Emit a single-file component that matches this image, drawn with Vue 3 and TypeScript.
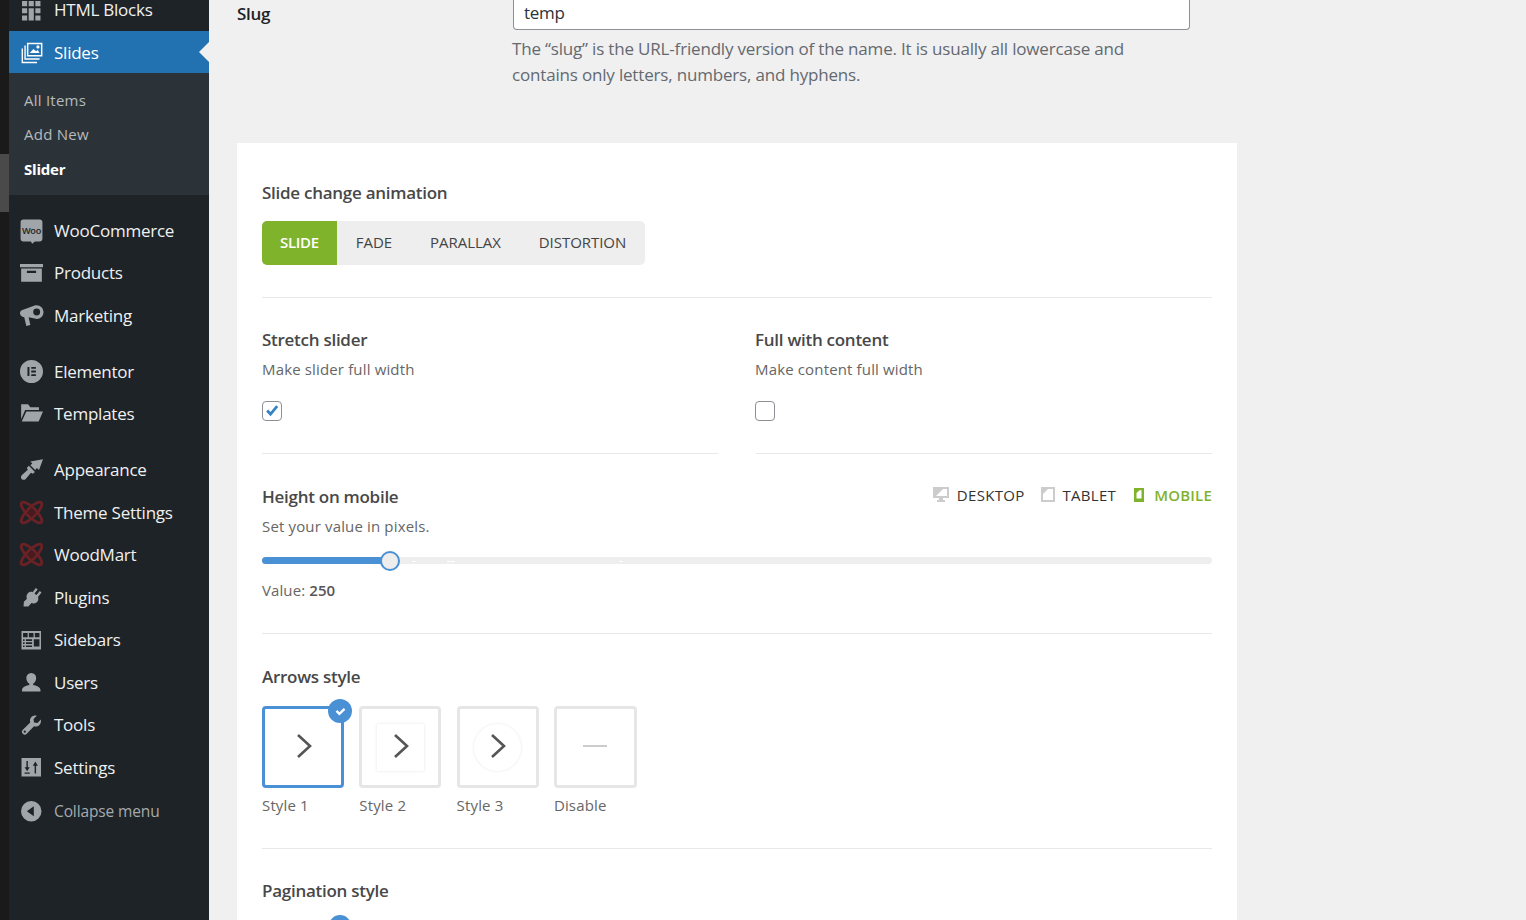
<script setup lang="ts">
interface MenuItem { label: string; icon: string; gap?: boolean; theme?: boolean; small?: boolean }

const icons: Record<string, string> = {
  html: 'M1 -6h18v5H1z M1 1h5v5H1z M7.5 1h5v5h-5z M14 1h5v5h-5z M1 8h5v5H1z M7.5 8h5v12h-5z M14 8h5v5h-5z M1 15h5v5H1z M14 15h5v5h-5z',
  slides: 'M6 1.500h13.500v12H6z M7.300 2.800v9.400h10.900V2.800z M8.500 10.500l3.200-3.600 2.200 2 1.500-1 1.600 2.600z M15.600 3.800a1.400 1.400 0 1 1 0 2.800 1.400 1.400 0 0 1 0-2.800z M3.800 4H5v11h12v1.300H3.800z M1.400 6.500H2.600V18h12.200v1.300H1.400z',
  woo: 'M3 .5h14A2.500 2.500 0 0 1 19.500 3v14a2.500 2.500 0 0 1-2.500 2.500h-4l-2.500 2-1-2H3A2.500 2.500 0 0 1 .5 17V3A2.500 2.500 0 0 1 3 .5z',
  products: 'M0 2.500h20v3H0z M1 6.500h18V18H1z M6 8.500v2h8v-2z',
  marketing: 'M14.500 1a6 6 0 0 1 0 12c-.6 0-1.200-.1-1.700-.3L7.500 11.500l1.500 6.800-3.500.8-1.800-7.500-1.700-.5C.9 10.300 0 9.200 0 8s.8-2.300 2-2.700L12.800 1.300c.5-.2 1.100-.3 1.700-.3z M14.500 4a3 3 0 1 0 0 6 3 3 0 0 0 0-6z',
  elementor: 'M10 0a10 10 0 1 1 0 20 10 10 0 0 1 0-20z M6.500 6v8h1.700V6z M9.800 6v1.600h4V6z M9.800 9.200v1.600h4V9.200z M9.800 12.400V14h4v-1.600z',
  templates: 'M1 2h6l2 2.500h7.500V7H4.500L1 15z M5.500 8.200H20L16.200 17H1.500z',
  appearance: 'M20 1l-3.500 9.500-1.800-1.700-1.500 1.700-4.200-4.200 1.700-1.500L9 3.100z M7.700 6.800l5.300 5.300-1.800 1.700-1.700-.9-4.500 5.300c-1 1-2.600 1-3.600 0-.9-.9-.7-2.500.3-3.400l5.100-4.500-.9-1.700z',
  plugins: 'M14.500 1l1.800 1.400-3.200 4 2 1.500 3.200-3.900 1.700 1.400-3.400 4.300c.7 1.900.2 3.900-1.200 5.200-1.500 1.300-3.500 1.500-5.200.7L7.200 19H2.500l.3-4.600 3-3C5 9.700 5.300 7.700 6.500 6.300 7.700 4.900 9.600 4.300 11.200 5z',
  sidebars: 'M.5 1h19v18H.5z M2 3v4h4.500V3z M7.700 3v4h4.500V3z M13.500 3v4H18V3z M2 9v1.700h1.500V9z M4.800 9v1.700h6V9z M12.500 9v7H18V9z M2 12v1.700h1.500V12z M4.800 12v1.700h6V12z M2 15v1.700h1.500V15z M4.800 15v1.700h6V15z',
  users: 'M10 1a4.800 4.800 0 0 1 4.800 5.200c0 2.500-1.700 4.600-3 5.300v1.200c2.800.6 7.200 1.700 7.200 5V19H1v-1.300c0-3.300 4.400-4.400 7.200-5v-1.200c-1.300-.7-3-2.800-3-5.300A4.800 4.800 0 0 1 10 1z',
  tools: 'M19.300 4.500c.5 1.800.1 3.800-1.300 5.200-1.500 1.500-3.500 1.800-5.300 1.200L5.600 18.200a2.600 2.600 0 0 1-3.800-3.800l7.200-7.200c-.6-1.800-.2-3.800 1.200-5.200C11.600.6 13.600.2 15.400.7l-3.200 3.200.5 3.500 3.400.5zM3.700 15.200a1.100 1.100 0 1 0 0 2.200 1.100 1.100 0 0 0 0-2.200z',
  settings: 'M.5 1h19v18H.5z M5.300 4v6H3.500L6 14l2.500-4H6.700V4z M13.300 16V8.500H11.500L14 4.500l2.500 4h-1.800V16z M3.500 15h5v1.300h-5z',
  collapse: 'M10 0a10 10 0 1 1 0 20 10 10 0 0 1 0-20z M12.500 5.200 5.700 10l6.800 4.800z',
}

const items: MenuItem[] = [
  { label: 'WooCommerce', icon: 'woo' },
  { label: 'Products', icon: 'products' },
  { label: 'Marketing', icon: 'marketing' },
  { label: 'Elementor', icon: 'elementor', gap: true },
  { label: 'Templates', icon: 'templates' },
  { label: 'Appearance', icon: 'appearance', gap: true },
  { label: 'Theme Settings', icon: 'theme', theme: true },
  { label: 'WoodMart', icon: 'theme', theme: true },
  { label: 'Plugins', icon: 'plugins', small: true },
  { label: 'Sidebars', icon: 'sidebars', small: true },
  { label: 'Users', icon: 'users', small: true },
  { label: 'Tools', icon: 'tools', small: true },
  { label: 'Settings', icon: 'settings', small: true },
]

const animations = ['Slide', 'Fade', 'Parallax', 'Distortion']
const arrows = [
  { label: 'Style 1', kind: 'one', active: true },
  { label: 'Style 2', kind: 'two', active: false },
  { label: 'Style 3', kind: 'three', active: false },
  { label: 'Disable', kind: 'none', active: false },
]
</script>

<template>
  <div class="page">
    <div class="strip"><div class="thumb"></div></div>

    <nav class="sidebar">
      <div class="row clipped">
        <svg class="ico small" viewBox="0 0 20 20"><path :d="icons.html" fill-rule="evenodd" /></svg>
        <span>HTML Blocks</span>
      </div>
      <div class="row current">
        <svg class="ico" viewBox="0 0 20 20"><path :d="icons.slides" fill-rule="evenodd" /></svg>
        <span>Slides</span>
        <i class="pointer"></i>
      </div>
      <ul class="submenu">
        <li>All Items</li>
        <li>Add New</li>
        <li class="on">Slider</li>
      </ul>
      <div class="rows">
        <div v-for="item in items" :key="item.label" class="row" :class="{ gap: item.gap }">
          <svg class="ico" :class="{ small: item.small }" viewBox="0 0 20 20">
            <template v-if="item.theme">
              <ellipse class="lobe" cx="10" cy="10" rx="12" ry="4" transform="rotate(45 10 10)" />
              <ellipse class="lobe" cx="10" cy="10" rx="12" ry="4" transform="rotate(-45 10 10)" />
              <path class="core" d="M10 6.500 13.500 10 10 13.500 6.500 10z" />
            </template>
            <path v-else :d="icons[item.icon]" fill-rule="evenodd" />
            <text v-if="item.icon === 'woo'" x="10" y="12.800" text-anchor="middle" class="woo">Woo</text>
          </svg>
          <span>{{ item.label }}</span>
        </div>
      </div>
      <div class="row collapse">
        <svg class="ico small" viewBox="0 0 20 20"><path :d="icons.collapse" fill-rule="evenodd" /></svg>
        <span>Collapse menu</span>
      </div>
    </nav>

    <main class="main">
      <section class="slug">
        <div class="slug-label">Slug</div>
        <div class="slug-field">
          <div class="input">temp</div>
          <p>The “slug” is the URL-friendly version of the name. It is usually all lowercase and<br />contains only letters, numbers, and hyphens.</p>
        </div>
      </section>

      <section class="card">
        <div class="block first">
          <h3>Slide change animation</h3>
          <div class="segments">
            <span v-for="(a, i) in animations" :key="a" class="segment" :class="{ active: i === 0 }">{{ a }}</span>
          </div>
        </div>

        <div class="two-col">
          <div class="col">
            <h3>Stretch slider</h3>
            <p class="hint">Make slider full width</p>
            <div class="check">
              <svg viewBox="0 0 20 20"><path d="M3.500 10.500l2.200-2.300 2.700 2.900L14.600 3.500l2.300 2-8.500 10.300z" /></svg>
            </div>
          </div>
          <div class="col right">
            <h3>Full with content</h3>
            <p class="hint">Make content full width</p>
            <div class="check"></div>
          </div>
        </div>

        <div class="block height">
          <div class="height-head">
            <h3>Height on mobile</h3>
            <div class="devices">
              <span class="device">
                <svg class="d-desktop" viewBox="0 0 16 16"><path fill-rule="evenodd" d="M0 0h16v11H10v2h2v2H4v-2h2v-2H0z M14 2v7H3L10 2z" /></svg>DESKTOP
              </span>
              <span class="device">
                <svg class="d-tablet" viewBox="0 0 14 15"><path fill-rule="evenodd" d="M0 0h14v15H0z M2 2v11h10V2H7L2 7z" /></svg>TABLET
              </span>
              <span class="device on">
                <svg class="d-mobile" viewBox="0 0 10 14"><path fill-rule="evenodd" d="M0 0h10v14H0z M2.500 5 5.500 2.200H7.500V10.500H2.500z" /></svg>MOBILE
              </span>
            </div>
          </div>
          <p class="hint">Set your value in pixels.</p>
          <div class="track">
            <div class="fill"></div>
            <div class="knob"></div>
            <i class="tick" style="left: 150px"></i>
            <i class="tick wide" style="left: 185px"></i>
            <i class="tick" style="left: 357px"></i>
          </div>
          <p class="value">Value: <b>250</b></p>
        </div>

        <div class="block arrows">
          <h3>Arrows style</h3>
          <div class="arrow-list">
            <div v-for="a in arrows" :key="a.label" class="arrow-item">
              <div class="arrow-box" :class="{ active: a.active }">
                <span v-if="a.active" class="badge">
                  <svg viewBox="0 0 12 12"><path d="M1.500 6.300l1.600-1.600 1.900 2L9 2.700l1.500 1.600L5 9.800z" /></svg>
                </span>
                <div v-if="a.kind !== 'none'" class="frame" :class="a.kind">
                  <svg class="chev" viewBox="0 0 16 24"><path d="M2 1 14 12 2 23" /></svg>
                </div>
                <div v-else class="dash"></div>
              </div>
              <div class="arrow-label">{{ a.label }}</div>
            </div>
          </div>
        </div>

        <div class="block pagination">
          <h3>Pagination style</h3>
          <div class="pag-badge"></div>
        </div>
      </section>
    </main>
  </div>
</template>

<style>
html, body { margin: 0; overflow: hidden; background: #f0f0f0; }
</style>

<style scoped>
.page {
  display: flex;
  height: 920px;
  overflow: hidden;
  background: #f0f0f0;
  font-family: "Open Sans", "Noto Sans", sans-serif;
}
p, h3, ul { margin: 0; padding: 0; }

.strip { width: 9px; background: #1a1a1a; padding-top: 154px; flex: none; }
.thumb { height: 58px; background: #4a4a4a; }

.sidebar { width: 200px; flex: none; background: #1d2327; color: #f0f0f1; }
.row {
  height: 42.5px;
  display: flex;
  align-items: center;
  padding-left: 10.5px;
  gap: 11.5px;
  font-size: 17px;
  letter-spacing: -0.24px;
  position: relative;
}
.row.clipped { margin-top: -11.5px; }
.row.gap { margin-top: 13.6px; }
.ico { width: 23px; height: 23px; fill: #a0a5aa; flex: none; overflow: visible; }
.ico.small { width: 20.5px; height: 20.5px; margin: 0 1.250px; }
.lobe { fill: none; stroke: #6b2125; stroke-width: 2.500; }
.core { fill: #4a1a1e; }
.woo { fill: #1d2327; font: 600 8px "Open Sans", sans-serif; }
.current { background: #2271b1; color: #fff; height: 42px; }
.current .ico { fill: #fff; }
.pointer {
  position: absolute;
  right: 0;
  top: 11px;
  border: 10px solid transparent;
  border-left: 0;
  border-right-color: #f0f0f0;
}
.submenu {
  list-style: none;
  height: 122px;
  box-sizing: border-box;
  padding: 10px 0 0 15px;
  background: #2c3338;
  color: #b6babd;
  font-size: 15px;
  letter-spacing: 0.24px;
  margin-bottom: 14px;
}
.submenu li { height: 34px; line-height: 34px; }
.submenu .on { color: #fff; font-weight: 700; letter-spacing: -0.2px; margin-top: 1px; }
.collapse { margin-top: 1px; color: #a7aaad; font-size: 15.500px; letter-spacing: -0.12px; }

.main { flex: 1; padding-left: 28px; min-width: 0; }
.slug { display: flex; height: 144px; margin-top: -1px; width: 1000px; }
.slug-label { width: 276px; color: #1d2327; font-size: 17px; font-weight: 600; letter-spacing: -0.3px; padding-top: 2px; line-height: 26px; }
.input {
  width: 677px;
  height: 31px;
  box-sizing: border-box;
  border: 1px solid #8c8f94;
  border-top: 0;
  border-radius: 0 0 4px 4px;
  background: #fff;
  color: #2c3338;
  font-size: 17px;
  letter-spacing: -0.3px;
  padding: 0 10px;
  line-height: 27px;
}
.slug-field p {
  margin: 6px 0 0 -1px;
  color: #646970;
  font-size: 17px;
  letter-spacing: -0.18px;
  line-height: 26px;
  white-space: nowrap;
}

.card { width: 950px; background: #fff; padding: 0 25px; height: 800px; color: #444; }
h3 { font-size: 17px; font-weight: 600; letter-spacing: -0.27px; color: #484848; line-height: 24px; }
.hint { font-size: 15px; color: #666; line-height: 22px; letter-spacing: 0.15px; }
.block { border-bottom: 1px solid #e8e8e8; }
.first { padding-top: 38px; height: 116px; }
.segments {
  margin-top: 16px;
  display: inline-flex;
  height: 44px;
  background: #eee;
  border-radius: 5px;
  overflow: hidden;
}
.segment {
  padding: 0 19px 2px;
  display: flex;
  align-items: center;
  text-transform: uppercase;
  font-size: 15px;
  font-weight: 500;
  letter-spacing: -0.05px;
  color: #444;
}
.segment.active { background: #7fb32b; color: #fff; font-weight: 600; padding: 0 18px 2px; letter-spacing: -0.3px; }

.two-col { display: grid; grid-template-columns: 456px 456px; column-gap: 38px; }
.col { height: 156px; padding-top: 30px; box-sizing: border-box; border-bottom: 1px solid #e8e8e8; }
.col .hint { margin-top: 6px; }
.right h3, .right .hint, .right .check { margin-left: -1px; }
.check {
  margin-top: 21px;
  width: 20px;
  height: 20px;
  box-sizing: border-box;
  border: 1px solid #8c8f94;
  border-radius: 4px;
}
.check svg { width: 18px; height: 18px; fill: #3582c4; display: block; }

.height { height: 180px; padding-top: 31px; box-sizing: border-box; }
.height-head { display: flex; justify-content: space-between; align-items: center; height: 24px; }
.devices { display: flex; gap: 16px; margin-top: -5px; }
.device {
  display: flex;
  align-items: center;
  gap: 8px;
  font-size: 15px;
  font-weight: 500;
  letter-spacing: 0.3px;
  color: #333;
}
.device svg { fill: #ccc; flex: none; }
.d-desktop { width: 16px; height: 16px; }
.d-tablet { width: 14px; height: 15px; }
.d-mobile { width: 10px; height: 14px; fill: #7fb32b !important; }
.device.on { color: #7fb32b; font-weight: 600; gap: 10px; margin-left: 2px; letter-spacing: 0.2px; }
.height .hint { margin-top: 6px; }
.track {
  position: relative;
  margin-top: 20px;
  height: 7px;
  background: #eee;
  border-radius: 4px;
}
.fill { width: 127px; height: 100%; background: #4a90d4; border-radius: 4px; }
.knob {
  position: absolute;
  left: 118px;
  top: -6.500px;
  width: 20px;
  height: 20px;
  box-sizing: border-box;
  border: 2px solid #4a90d4;
  border-radius: 50%;
  background: #ededed;
}
.tick { position: absolute; top: 4px; width: 4px; height: 1px; background: #fff; }
.tick.wide { width: 8px; }
.value { margin-top: 15px; font-size: 15px; color: #666; line-height: 22px; letter-spacing: 0.1px; }
.value b { font-weight: 600; color: #555; }

.arrows { height: 215px; padding-top: 31px; box-sizing: border-box; }
.arrow-list { display: flex; margin-top: 17px; }
.arrow-item { width: 97.300px; }
.arrow-box {
  position: relative;
  width: 82px;
  height: 82px;
  box-sizing: border-box;
  border: 3px solid #e6e6e6;
  border-radius: 4px;
  display: flex;
  align-items: center;
  justify-content: center;
}
.arrow-item:last-child .arrow-box { width: 83px; }
.arrow-box.active { border-color: #4a90d4; }
.badge {
  position: absolute;
  top: -10px;
  right: -11px;
  width: 24px;
  height: 24px;
  border-radius: 50%;
  background: #4a90d4;
  display: flex;
  align-items: center;
  justify-content: center;
}
.badge svg { width: 13px; height: 13px; fill: #fff; }
.frame { width: 47px; height: 47px; display: flex; align-items: center; justify-content: center; }
.frame.two { box-shadow: 0 0 3px rgba(0, 0, 0, .1); }
.frame.three { border-radius: 50%; box-shadow: 0 0 3px rgba(0, 0, 0, .1); }
.chev { width: 16px; height: 24px; margin: -2px 0 0 1.500px; fill: none; stroke: #555; stroke-width: 2.600; }
.dash { width: 24px; height: 2px; margin-top: -2px; background: #ccc; }
.arrow-label { margin-top: 6px; font-size: 15px; color: #666; line-height: 22px; letter-spacing: 0.15px; }

.pagination { border: 0; padding-top: 30px; position: relative; height: 60px; }
.pag-badge {
  position: absolute;
  left: 67px;
  top: 66px;
  width: 22px;
  height: 22px;
  border-radius: 50%;
  background: #4a90d4;
}
</style>
